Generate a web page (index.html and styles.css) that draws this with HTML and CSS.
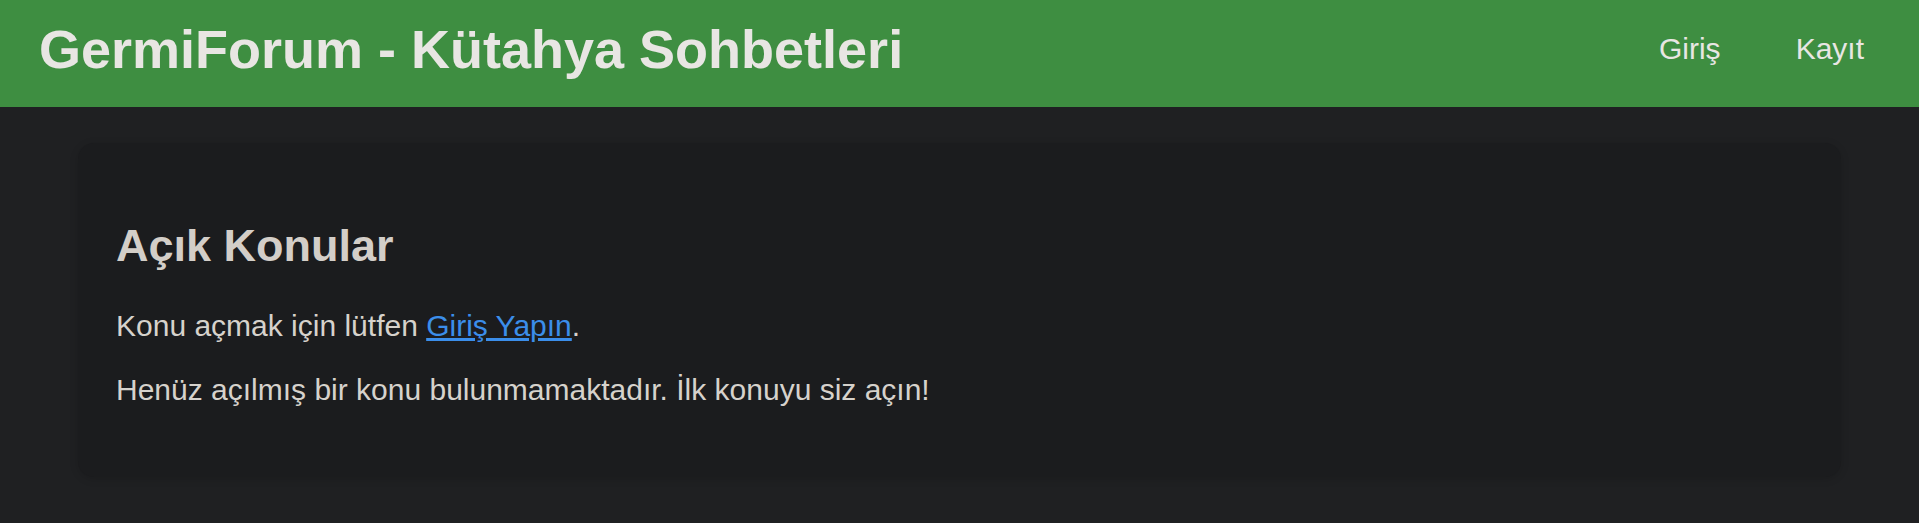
FILE: index.html
```html
<!DOCTYPE html>
<html lang="tr">
<head>
    <meta charset="UTF-8">
    <title>GermiForum - Kütahya Sohbetleri</title>
    <link rel="stylesheet" href="styles.css">
</head>
<body>

    <header class="site-header">
        <h1 class="site-title">GermiForum - Kütahya Sohbetleri</h1>
        <nav class="site-nav">
            <a href="#">Giriş</a>
            <a href="#">Kayıt</a>
        </nav>
    </header>

    <main class="container">
        <section class="card">
            <h2>Açık Konular</h2>
            <p>Konu açmak için lütfen <a class="link" href="#">Giriş Yapın</a>.</p>
            <p>Henüz açılmış bir konu bulunmamaktadır. İlk konuyu siz açın!</p>
        </section>
    </main>

</body>
</html>
```

FILE: styles.css
```css
body {
    font-family: "Liberation Sans", Arial, sans-serif;
    font-size: 30px;
    background-color: #1f2022;
    margin: 0;
    padding: 0;
    color: #d6d2cc;
}

.site-header {
    display: flex;
    align-items: center;
    justify-content: space-between;
    height: 107px;
    padding: 0 55px 0 39px;
    background-color: #3e8e41;
    box-sizing: border-box;
}

.site-title {
    margin: 0 0 10px;
    font-size: 54px;
    font-weight: bold;
    color: #e8e6e3;
}

.site-nav {
    display: flex;
    gap: 75px;
    margin-bottom: 10px;
}

.site-nav a {
    color: #e8e6e3;
    text-decoration: none;
}

.container {
    padding: 36px 78px 46px;
}

.card {
    background-color: #1b1c1e;
    border-radius: 16px;
    padding: 40px 38px;
    box-shadow: 0 2px 8px rgba(0, 0, 0, 0.15);
}

.card h2 {
    font-size: 45px;
    margin: 37px 0 37px;
    color: #d3cec8;
}

.card p {
    margin: 30px 0;
}

.card p:last-child {
    margin-bottom: 30px;
}

.link {
    color: #3b8eea;
}
```
